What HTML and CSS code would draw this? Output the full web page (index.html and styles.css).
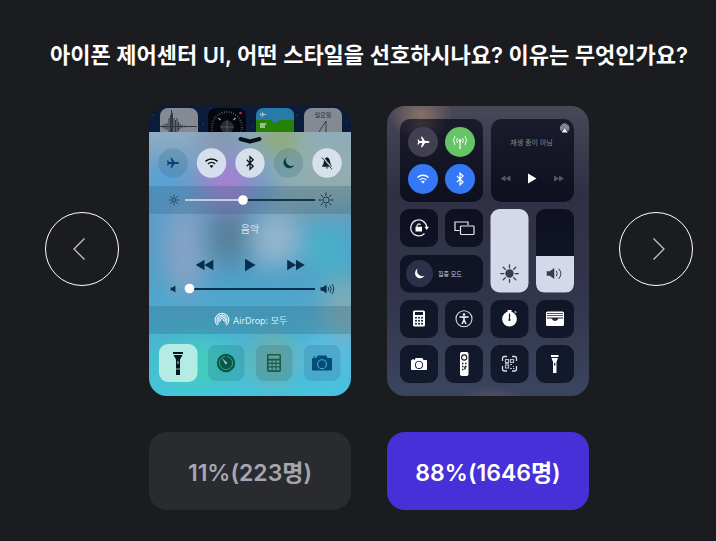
FILE: index.html
```html
<!DOCTYPE html>
<html lang="ko">
  <head>
    <meta charset="UTF-8" />
    <meta name="viewport" content="width=device-width, initial-scale=1.0" />
    <title>아이폰 제어센터 UI</title>
    <link rel="stylesheet" href="styles.css">
  </head>

  <body>
    <!-- shared icons, centred on 0,0 -->
    <svg class="sprite" width="0" height="0" aria-hidden="true">
      <defs>
        <g id="plane">
          <path d="M6 0C6-.8 5-1.1 4-1.1H1.6L-1.3-5.2H-2.6L-1.2-1.1H-3.8L-5-2.6H-6L-5.3 0L-6 2.6H-5L-3.8 1.1H-1.2L-2.6 5.2H-1.3L1.6 1.1H4C5 1.1 6 .8 6 0Z" fill="currentColor" />
        </g>
        <g id="wifi" fill="none" stroke="currentColor" stroke-width="1.5">
          <path d="M-6-1.6A8.6 8.6 0 0 1 6-1.6" />
          <path d="M-3.6 1A5.2 5.2 0 0 1 3.6 1" />
          <path d="M0 4.9L-1.9 2.9A2.8 2.8 0 0 1 1.9 2.9Z" fill="currentColor" stroke="none" />
        </g>
        <g id="bluetooth">
          <path d="M-3.3-3.3L3.2 3.2L0 6.2V-6.2L3.2-3.2L-3.3 3.3" fill="none" stroke="currentColor" stroke-width="1.3" />
        </g>
        <g id="moon">
          <path d="M-2-5.6A5.8 5.8 0 1 0 5.8 2.3A5.8 5.8 0 0 1-2-5.6Z" fill="currentColor" />
        </g>
        <g id="play">
          <path d="M-5-6.3L5.6 0L-5 6.3Z" fill="currentColor" />
        </g>
        <g id="forward">
          <path d="M-8.8-5.2L0 0L-8.8 5.2ZM0-5.2L8.8 0L0 5.2Z" fill="currentColor" />
        </g>
        <g id="rays">
          <path d="M0-4.6V-7M0 4.6V7M-4.6 0H-7M4.6 0H7M-3.3-3.3L-5-5M3.3-3.3L5-5M-3.3 3.3L-5 5M3.3 3.3L5 5" fill="none" stroke="currentColor" stroke-linecap="round" />
        </g>
        <g id="speaker">
          <path d="M-3-1.8H-.6L3-4.4V4.4L-.6 1.8H-3Z" fill="currentColor" />
        </g>
        <g id="airdrop" fill="none" stroke="currentColor" stroke-width="1.2">
          <path d="M-4.4 5.3A6.8 6.8 0 1 1 4.4 5.3" />
          <path d="M-3.5 3.7A5 5 0 1 1 3.5 3.7" />
          <path d="M-2.5 2.2A3.3 3.3 0 1 1 2.5 2.2" />
          <path d="M-1.3 1A1.6 1.6 0 1 1 1.3 1" />
        </g>
        <g id="calculator">
          <path fill="currentColor" fill-rule="evenodd" d="M-5.6-9H5.6Q7-9 7-7.6V7.6Q7 9 5.6 9H-5.6Q-7 9-7 7.6V-7.6Q-7-9-5.6-9ZM-5.4-7.4V-4.2H5.4V-7.4ZM-5.4-2.6V-.2H-2.4V-2.6ZM-1.4-2.6V-.2H1.4V-2.6ZM2.4-2.6V-.2H5.4V-2.6ZM-5.4 .9V3.3H-2.4V.9ZM-1.4 .9V3.3H1.4V.9ZM2.4 .9V3.3H5.4V.9ZM-5.4 4.5V7.2H-2.4V4.5ZM-1.4 4.5V7.2H1.4V4.5ZM2.4 4.5V7.2H5.4V4.5Z" />
        </g>
        <g id="calculator-solid">
          <path fill="currentColor" fill-rule="evenodd" d="M-4.500-8H4.500Q6-8 6-6.500V6.500Q6 8 4.500 8H-4.500Q-6 8-6 6.500V-6.500Q-6-8-4.500-8ZM-4-6.500V-3.500H4V-6.500Z" />
          <g class="keys">
            <circle cx="-3" cy="-.8" r="1" /><circle cy="-.8" r="1" /><circle cx="3" cy="-.8" r="1" />
            <circle cx="-3" cy="2.200" r="1" /><circle cy="2.200" r="1" /><circle cx="3" cy="2.200" r="1" />
            <circle cx="-3" cy="5.200" r="1" /><circle cy="5.200" r="1" /><circle cx="3" cy="5.200" r="1" />
          </g>
        </g>
        <g id="camera">
          <path fill="currentColor" fill-rule="evenodd" d="M-9-5H-5.6L-4.2-7.4H4.2L5.6-5H9Q10-5 10-4V6.4Q10 7.6 9 7.6H-9Q-10 7.6-10 6.4V-4Q-10-5-9-5ZM0-3.8A5 5 0 1 0 0 6.2A5 5 0 1 0 0-3.8ZM0-2.7A3.9 3.9 0 1 1 0 5.1A3.9 3.9 0 1 1 0-2.7Z" />
          <path d="M-8.6-6.4H-6.4V-5.4H-8.6Z" fill="currentColor" />
        </g>
      </defs>
    </svg>

    <main class="poll">
      <h1 class="poll-title">아이폰 제어센터 UI, 어떤 스타일을 선호하시나요? 이유는 무엇인가요?</h1>

      <div class="gallery">
        <button class="arrow arrow-prev" type="button" aria-label="이전">
          <svg viewBox="0 0 12 24" width="12" height="24"><path d="M11.5 1.5L1 12L11.5 22.5" /></svg>
        </button>

        <div class="shots">
          <svg class="shot" viewBox="0 0 202 290" role="img" aria-label="이전 제어센터">
            <defs>
              <filter id="soft" x="-100%" y="-100%" width="300%" height="300%" color-interpolation-filters="sRGB"><feGaussianBlur stdDeviation="12" /></filter>
              <linearGradient id="old-bg" x1="0" y1="0" x2="0" y2="1">
                <stop offset="0" stop-color="#90acc5" />
                <stop offset=".25" stop-color="#619ac5" />
                <stop offset=".55" stop-color="#50a0c8" />
                <stop offset="1" stop-color="#44c4e0" />
              </linearGradient>
              <clipPath id="old-panel"><rect y="26" width="202" height="264" /></clipPath>
            </defs>

            <!-- dimmed home screen -->
            <rect width="202" height="28" fill="#0b1c3a" />
            <g fill="#4b6486"><circle cx="4" cy="9" r=".6" /><circle cx="54" cy="18" r=".6" /><circle cx="61" cy="2" r=".6" /><circle cx="148" cy="9" r=".6" /><circle cx="104" cy="20" r=".5" /><circle cx="198" cy="16" r=".5" /></g>
            <rect x="11" y="2" width="38" height="38" rx="8" fill="#858991" />
            <path d="M11 20.500H48M14 19V22M16 18V23M18 17V24M20 12V26M21.500 9V26M22.500 4V26M23.500 7V26M25 12V26M26.500 14V26M28 12V26M29.500 16V25M31 18V23M33 19V22M36 19.500V21.500" stroke="#353942" stroke-width="1" />
            <rect x="59" y="2" width="38" height="38" rx="8" fill="#04070d" />
            <circle cx="78" cy="21" r="15" fill="none" stroke="#777b82" stroke-width="2" stroke-dasharray=".6 1.8" />
            <circle cx="78" cy="21" r="6.500" fill="#252c34" />
            <path d="M78 14V26M71 21H85" stroke="#717780" stroke-width=".6" />
            <path d="M69.500 12L71.500 14M84.500 14L86.500 12" stroke="#9a9da3" stroke-width="1.500" />
            <circle cx="91.500" cy="7" r="1.300" fill="#c23434" />
            <path d="M107 26V10Q107 2 115 2H137Q145 2 145 10V26Z" fill="#287aa8" />
            <path d="M107 14H121Q123 14 124 16Q126 18 129 16L131 14H145V26H107Z" fill="#268207" />
            <use href="#plane" transform="translate(114 8.500) scale(.55)" color="#a9c4d3" />
            <path d="M111 17H116V22H111ZM113 17H117.500V19" fill="#9cba91" />
            <rect x="155" y="2" width="38" height="38" rx="8" fill="#858991" />
            <text class="tiny-date" x="174" y="11" text-anchor="middle">월요일</text>
            <path d="M170 26L177 15V26" fill="none" stroke="#252931" stroke-width=".8" />

            <!-- panel -->
            <g clip-path="url(#old-panel)">
              <rect y="26" width="202" height="264" fill="url(#old-bg)" />
              <g filter="url(#soft)">
                <ellipse cx="175" cy="65" rx="54" ry="40" fill="#92aeb2" />
                <ellipse cx="130" cy="32" rx="20" ry="14" fill="#91a95c" />
                <ellipse cx="72" cy="30" rx="24" ry="12" fill="#8090a4" />
                <ellipse cx="78" cy="78" rx="26" ry="26" fill="#a67fd2" />
                <ellipse cx="10" cy="82" rx="26" ry="24" fill="#57a2d8" />
                <ellipse cx="170" cy="96" rx="50" ry="10" fill="#84a1a4" />
                <ellipse cx="36" cy="145" rx="20" ry="48" fill="#87a3c6" />
                <ellipse cx="80" cy="130" rx="22" ry="28" fill="#567f98" />
                <ellipse cx="126" cy="133" rx="26" ry="28" fill="#93b6cc" />
                <ellipse cx="178" cy="145" rx="22" ry="28" fill="#46b2ca" />
                <ellipse cx="198" cy="205" rx="26" ry="35" fill="#7fabb5" />
                <ellipse cx="48" cy="258" rx="42" ry="24" fill="#42cdbc" />
                <ellipse cx="124" cy="254" rx="20" ry="24" fill="#7caf9c" />
                <ellipse cx="180" cy="250" rx="28" ry="25" fill="#59bee3" />
              </g>
              <rect class="band" y="80" width="202" height="28" />
              <rect class="band" y="200" width="202" height="28" />
            </g>
            <path d="M91.500 33L101 35.500L110.500 33" fill="none" stroke="#06131b" stroke-width="4" stroke-linecap="round" stroke-linejoin="round" />

            <g class="toggle-off"><circle cx="24" cy="57" r="14.700" /><circle cx="139.500" cy="57" r="14.700" /></g>
            <g class="toggle-on"><circle cx="62.500" cy="57" r="14.700" /><circle cx="101" cy="57" r="14.700" /><circle cx="178" cy="57" r="14.700" /></g>
            <use href="#plane" x="24" y="57" color="#0d3e74" />
            <use href="#wifi" x="62.500" y="57" color="#06141c" />
            <use href="#bluetooth" x="101" y="57" color="#06141c" />
            <use href="#moon" x="139.500" y="57" color="#073b47" />
            <g transform="translate(178 57)">
              <path d="M0-5.800C3-5 3.200-1 3.600 1L5.200 3.800H-5.200L-3.600 1C-3.200-1-3-5 0-5.800ZM-1.500 4.600H1.500Q0 6.500-1.500 4.600Z" fill="#0b1b22" />
              <path d="M-4.500-6L5.500 6" stroke="#cbdce4" stroke-width="1.800" />
              <path d="M-5-5.400L5 6.200" stroke="#0b1b22" stroke-width=".8" />
            </g>

            <g class="ink-dark">
              <circle class="line" cx="25" cy="94" r="2" />
              <use href="#rays" transform="translate(25 94) scale(.7)" />
              <circle class="line" cx="177" cy="94" r="3" />
              <use href="#rays" x="177" y="94" />
              <path class="track" d="M94 94H166" />
              <path class="track-light" d="M36 94H94" />
              <circle class="knob" cx="94" cy="94" r="4.800" />
            </g>

            <text class="shot-text" x="101" y="127" text-anchor="middle">음악</text>

            <g class="ink-navy">
              <use href="#forward" transform="translate(55.500 159) scale(-1 1)" />
              <use href="#play" x="101" y="159" />
              <use href="#forward" x="147" y="159" />
              <use href="#speaker" transform="translate(24 183) scale(-.8 .8) rotate(180)" />
              <path class="track" d="M40 183H166" />
              <circle class="knob" cx="40.500" cy="182.500" r="4.800" />
              <use href="#speaker" x="174.500" y="183" />
              <path class="line" d="M179 181Q180.500 183 179 185M181 179.500Q183.500 183 181 186.500M183 178Q186.500 183 183 188" />
            </g>

            <use href="#airdrop" x="73" y="214" color="#d9edf3" />
            <text class="airdrop-text" x="84" y="218">AirDrop: 모두</text>

            <rect x="10" y="238" width="38.500" height="38" rx="9" fill="#b4ece4" />
            <g class="toggle-off"><rect x="59" y="239" width="36.500" height="36" rx="8" /><rect x="107" y="239" width="36.500" height="36" rx="8" /><rect x="155" y="239" width="36.500" height="36" rx="8" /></g>
            <path d="M24 246H34V248H24ZM24.500 249H33.500L31 253.500V269H27V253.500Z" fill="#051820" />
            <path d="M29 255V258M27 263H31" stroke="#8dbcb9" stroke-width="1.200" />
            <circle cx="77" cy="257" r="9.200" fill="#075848" />
            <circle cx="77" cy="257" r="6.600" fill="none" stroke="#3c9b83" stroke-width="1" />
            <path d="M77 248V253" stroke="#075848" stroke-width="2" />
            <path d="M73 252L78.500 257L76.500 258.500Z" fill="#8fd1bb" />
            <use href="#calculator" x="125" y="257" color="#1b5b4d" />
            <use href="#camera" x="173" y="257" color="#034d79" />
          </svg>

          <svg class="shot" viewBox="0 0 202 290" role="img" aria-label="새로운 제어센터">
            <defs>
              <linearGradient id="new-bg" x1="0" y1="0" x2="0" y2="1">
                <stop offset="0" stop-color="#494859" />
                <stop offset=".3" stop-color="#2f3044" />
                <stop offset=".65" stop-color="#32354b" />
                <stop offset="1" stop-color="#3b455f" />
              </linearGradient>
              <linearGradient id="tile-bg" gradientUnits="userSpaceOnUse" x1="0" y1="13" x2="0" y2="277">
                <stop offset="0" stop-color="#1b1c2b" />
                <stop offset=".3" stop-color="#0e1020" />
                <stop offset="1" stop-color="#131a2d" />
              </linearGradient>
              <radialGradient id="warm">
                <stop offset="0" stop-color="#967969" stop-opacity=".8" />
                <stop offset="1" stop-color="#967969" stop-opacity="0" />
              </radialGradient>
            </defs>
            <rect width="202" height="290" fill="url(#new-bg)" />
            <ellipse cx="34" cy="8" rx="32" ry="26" fill="url(#warm)" />
            <ellipse cx="104" cy="291" rx="32" ry="12" fill="url(#warm)" opacity=".25" />

            <g fill="url(#tile-bg)">
              <rect x="13" y="13" width="83" height="83" rx="10" />
              <rect x="104" y="13" width="83" height="83" rx="10" />
              <rect x="13" y="103" width="38" height="38" rx="9" />
              <rect x="58" y="103" width="38" height="38" rx="9" />
              <rect x="13" y="149" width="83" height="37.500" rx="9" />
              <rect x="149" y="103" width="38" height="83.500" rx="9" />
              <rect x="13" y="194" width="38" height="38" rx="9" />
              <rect x="58" y="194" width="38" height="38" rx="9" />
              <rect x="103.500" y="194" width="38" height="38" rx="9" />
              <rect x="149" y="194" width="38" height="38" rx="9" />
              <rect x="13" y="239" width="38" height="38" rx="9" />
              <rect x="58" y="239" width="38" height="38" rx="9" />
              <rect x="103.500" y="239" width="38" height="38" rx="9" />
              <rect x="149" y="239" width="38" height="38" rx="9" />
            </g>
            <ellipse cx="34" cy="18" rx="25" ry="16" fill="url(#warm)" opacity=".3" />

            <!-- connectivity -->
            <circle cx="36" cy="36" r="15" fill="#424050" />
            <circle cx="73" cy="36" r="15" fill="#65c466" />
            <circle cx="36" cy="73" r="15" fill="#3478f6" />
            <circle cx="73" cy="73" r="15" fill="#3478f6" />
            <g color="#fff">
              <use href="#plane" x="36.500" y="36" />
              <use href="#wifi" transform="translate(36 73) scale(.92)" />
              <use href="#bluetooth" transform="translate(73 73) scale(.95)" />
            </g>
            <g fill="none" stroke="#fff">
              <path d="M73 35V43" stroke-width="1.200" />
              <path d="M70.500 32Q68.700 34.500 70.500 37M75.500 32Q77.300 34.500 75.500 37M68 30Q65 34.500 68 39M78 30Q81 34.500 78 39" stroke-width="1" />
              <circle cx="73" cy="34.500" r="1" fill="#fff" />
            </g>

            <!-- now playing -->
            <use href="#airdrop" transform="translate(177.700 22) scale(.62)" color="#d6d7df" />
            <path d="M177.700 22L180.700 26.500H174.700Z" fill="#f2f2f5" />
            <text class="playing-text" x="144.500" y="39" text-anchor="middle">재생 중이 아님</text>
            <use href="#forward" transform="translate(118.500 72.500) scale(-.56 .56)" color="#565765" />
            <use href="#play" transform="translate(145 72.500) scale(.8)" color="#fff" />
            <use href="#forward" transform="translate(172 72.500) scale(.56)" color="#565765" />

            <!-- rotation lock and mirroring -->
            <g fill="none" stroke="#e9e9ed" stroke-width="1.200">
              <path d="M37.500 127.500A8 8 0 1 1 39.700 121" />
              <path d="M30 121V119.500Q32 116.500 33.500 119" />
              <path d="M72.500 124.500H68V116H81V119" />
              <rect x="73.500" y="120" width="13.500" height="8.500" rx=".8" />
            </g>
            <path d="M28.500 120.800H35V125.500H28.500ZM37.500 120.700H42L39.700 124Z" fill="#fff" />

            <!-- focus -->
            <circle cx="32.500" cy="167.500" r="13.500" fill="#2d3048" />
            <use href="#moon" transform="translate(32.500 167.500) scale(.88)" color="#fff" />
            <text class="focus-text" x="51" y="170">집중 모드</text>

            <!-- brightness and volume -->
            <rect x="103.500" y="103" width="38" height="83.500" rx="9" fill="#d5d7eb" />
            <path d="M149 150H187V177.500Q187 186.500 178 186.500H158Q149 186.500 149 177.500Z" fill="#d5d7eb" />
            <g color="#383b49">
              <circle cx="122.500" cy="167.500" r="4.200" fill="currentColor" />
              <use href="#rays" transform="translate(122.500 167.500) scale(1.250)" />
              <use href="#speaker" transform="translate(163.500 167.500) scale(1.250)" />
              <path d="M169.500 165Q171 167.500 169.500 170M172 163Q176 167.500 172 172.500" fill="none" stroke="currentColor" stroke-linecap="round" />
            </g>

            <!-- shortcuts -->
            <g color="#fff">
              <use href="#calculator-solid" x="32" y="212.500" />
              <use href="#camera" transform="translate(32 258) scale(.8)" />
            </g>
            <circle cx="77" cy="212.700" r="8" fill="none" stroke="#ddd" stroke-width="1.100" />
            <circle cx="77" cy="208.500" r="1.200" fill="#fff" />
            <path d="M72.500 211H81.500M77 211V214L75 218M77 214L79 218" fill="none" stroke="#fff" stroke-width="1.500" />
            <circle cx="122.500" cy="213" r="7.400" fill="#fff" />
            <path d="M120.500 204H124.500V206H120.500ZM127 206L129 205L129.500 207Z" fill="#fff" />
            <path d="M122.500 207.500V214" stroke="#15192a" stroke-width="1.200" />
            <circle cx="122.500" cy="214" r="1.100" fill="#15192a" />
            <rect x="159" y="205.500" width="18" height="14.500" rx="1.500" fill="#fff" />
            <path d="M160 207.500H176M160 209.500H176" stroke="#25283a" stroke-width=".8" />
            <path d="M160 211.500H176V212.500H171.500Q170 215 168 215Q166 215 164.500 212.500H160Z" fill="#25283a" />
            <rect x="73" y="246" width="8.500" height="24" rx="1.800" fill="#fff" />
            <circle cx="77.200" cy="251.500" r="2.600" fill="none" stroke="#15192a" stroke-width="1.100" />
            <path d="M75 257.500H76.500M78 257.500H79.500M75 260.500H76.500M78 260.500H79.500M75 263.500H76.500M78 263.500V260.500" stroke="#15192a" stroke-width="1.500" />
            <path d="M115.500 255V252.500Q115.500 250.500 117.500 250.500H120M125 250.500H127.500Q129.500 250.500 129.500 252.500V255M129.500 260V263Q129.500 265 127.500 265H125M120 265H117.500Q115.500 265 115.500 263V260" fill="none" stroke="#d9dbe2" stroke-width="1.300" />
            <path d="M118.500 253.500H121.500V256.500H118.500ZM123.500 253.500H126.500V256.500H123.500ZM118.500 259H121.500V262H118.500Z" fill="none" stroke="#b8bac5" stroke-width="1.200" />
            <path d="M123 258.500H125M126 260.500H127M123 262.500H125M126 262.500H127.500M118 257.700H122" stroke="#b8bac5" />
            <path d="M164 249H171.500V251H164ZM164.500 252H171L169.500 256V267H166V256Z" fill="#fff" />
            <path d="M167.700 257V259.500" stroke="#15192a" stroke-width="1.200" />
          </svg>
        </div>

        <button class="arrow arrow-next" type="button" aria-label="다음">
          <svg viewBox="0 0 12 24" width="12" height="24"><path d="M.5 1.500L11 12L.5 22.500" /></svg>
        </button>
      </div>

      <div class="results">
        <button class="result" type="button">11%(223명)</button>
        <button class="result result-best" type="button">88%(1646명)</button>
      </div>
    </main>
  </body>
</html>
```

FILE: styles.css
```css
* {
  box-sizing: border-box;
}

body {
  margin: 0;
  background: #1b1c1f;
  color: #fff;
  font-family: Inter, "Noto Sans CJK KR", sans-serif;
}

.sprite {
  position: absolute;
}

.poll {
  padding: 37px 23px 31px 45px;
}

.poll-title {
  margin: 0 0 33px;
  font-size: 22px;
  font-weight: 600;
  line-height: 36px;
  text-align: center;
}

.gallery {
  display: flex;
  align-items: center;
  gap: 30px;
}

.shots {
  flex: 1;
  display: grid;
  grid-template-columns: 1fr 1fr;
  gap: 36px;
}

.shot {
  display: block;
  width: 100%;
  border-radius: 18px;
}

.arrow {
  display: flex;
  align-items: center;
  justify-content: center;
  width: 74px;
  height: 74px;
  margin-bottom: 4px;
  padding: 0;
  border: 1px solid #fff;
  border-radius: 50%;
  background: none;
  cursor: pointer;
}

.arrow-prev {
  padding-right: 6px;
}

.arrow-next {
  padding-left: 6px;
}

.arrow path {
  fill: none;
  stroke: #c4c4c6;
  stroke-width: 1.3;
}

.results {
  display: grid;
  grid-template-columns: 1fr 1fr;
  gap: 36px;
  margin-top: 36px;
  padding: 0 104px;
}

.result {
  height: 78px;
  padding: 0;
  border: 0;
  border-radius: 18px;
  background: #2a2b2f;
  color: #a5a7b0;
  font: inherit;
  font-size: 23px;
  font-weight: 600;
  cursor: pointer;
}

.result-best {
  background: #4830d8;
  color: #fff;
}

/* control center drawings */
.band {
  fill: #2e5870;
  fill-opacity: 0.26;
}

.toggle-off {
  fill: #26647e;
  fill-opacity: 0.22;
}

.toggle-on {
  fill: #dce5ee;
  fill-opacity: 0.92;
}

.ink-dark {
  color: #173344;
}

.ink-navy {
  color: #062f4d;
}

.line {
  fill: none;
  stroke: currentColor;
  stroke-width: 0.9;
}

.track,
.track-light {
  stroke: currentColor;
  stroke-width: 2;
}

.track-light {
  stroke: #c3cddc;
}

.knob {
  fill: #fff;
}

.keys {
  fill: #12172a;
}

.shot-text {
  fill: #d7e4ec;
  font-size: 10px;
}

.airdrop-text {
  fill: #dcedf3;
  font-size: 9px;
}

.tiny-date {
  fill: #2a2d34;
  font-size: 6px;
}

.playing-text {
  fill: #888994;
  font-size: 7px;
}

.focus-text {
  fill: #d5d6de;
  font-size: 6px;
}
```
